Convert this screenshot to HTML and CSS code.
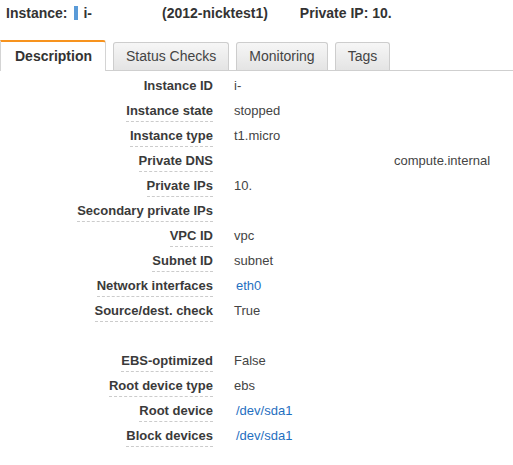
FILE: index.html
```html
<!DOCTYPE html>
<html>
<head>
<meta charset="utf-8">
<link rel="stylesheet" href="styles.css">
</head>
<body>
<div class="header">
  <span class="h-label">Instance:</span>
  <span class="h-bar"></span>
  <span class="h-id">i-</span>
  <span class="h-name">(2012-nicktest1)</span>
  <span class="h-ip">Private IP: 10.</span>
</div>
<div class="tabs">
  <div class="tab active">Description</div>
  <div class="tab">Status Checks</div>
  <div class="tab">Monitoring</div>
  <div class="tab">Tags</div>
</div>
<div class="details">
  <div class="lbl"><span class="plain">Instance ID</span></div><div class="val">i-</div>
  <div class="lbl"><span>Instance state</span></div><div class="val">stopped</div>
  <div class="lbl"><span>Instance type</span></div><div class="val">t1.micro</div>
  <div class="lbl"><span>Private DNS</span></div><div class="val"><span class="dns">compute.internal</span></div>
  <div class="lbl"><span>Private IPs</span></div><div class="val">10.</div>
  <div class="lbl"><span>Secondary private IPs</span></div><div class="val"></div>
  <div class="lbl"><span>VPC ID</span></div><div class="val">vpc</div>
  <div class="lbl"><span>Subnet ID</span></div><div class="val">subnet</div>
  <div class="lbl"><span>Network interfaces</span></div><div class="val"><a class="link">eth0</a></div>
  <div class="lbl"><span>Source/dest. check</span></div><div class="val">True</div>
  <div class="lbl"></div><div class="val"></div>
  <div class="lbl"><span>EBS-optimized</span></div><div class="val">False</div>
  <div class="lbl"><span>Root device type</span></div><div class="val">ebs</div>
  <div class="lbl"><span>Root device</span></div><div class="val"><a class="link">/dev/sda1</a></div>
  <div class="lbl"><span>Block devices</span></div><div class="val"><a class="link">/dev/sda1</a></div>
</div>
</body>
</html>
```
FILE: styles.css
```css
html, body {
  margin: 0;
  padding: 0;
  background: #fff;
}
body {
  font-family: "Liberation Sans", Arial, sans-serif;
  color: #444;
  width: 513px;
  height: 465px;
  overflow: hidden;
}
.header {
  display: flex;
  align-items: center;
  height: 26px;
  padding-left: 6px;
  font-size: 14px;
  font-weight: bold;
  color: #333;
}
.h-bar {
  display: inline-block;
  width: 4px;
  height: 14px;
  background: #5a9bd8;
  margin-left: 7px;
}
.h-id {
  margin-left: 5px;
}
.h-name {
  margin-left: 70px;
}
.h-ip {
  margin-left: 32px;
}
.tabs {
  display: flex;
  align-items: flex-end;
  gap: 7px;
  margin-top: 14px;
  border-bottom: 1px solid #cfcfcf;
  height: 30px;
}
.tab {
  box-sizing: border-box;
  height: 28px;
  line-height: 27px;
  padding: 0 12px;
  font-size: 14px;
  color: #444;
  border: 1px solid #cdcdcd;
  border-bottom: none;
  border-radius: 3px 3px 0 0;
  background: linear-gradient(#f6f6f6, #e4e4e4);
}
.tab.active {
  height: 31px;
  line-height: 28px;
  margin-bottom: -1px;
  padding: 0 13px 0 14px;
  border-top: 2px solid #f7931e;
  border-left: 1px solid #d4d4d4;
  border-right: 1px solid #d4d4d4;
  border-radius: 0 3px 0 0;
  background: #fff;
  font-weight: bold;
  color: #333;
}
.details {
  display: grid;
  grid-template-columns: 213px 1fr;
  column-gap: 21px;
  grid-auto-rows: 25px;
  margin-top: 3px;
  font-size: 13px;
}
.lbl {
  text-align: right;
  font-weight: bold;
  color: #3a3a3a;
  display: flex;
  justify-content: flex-end;
  align-items: flex-start;
  padding-top: 4px;
  box-sizing: border-box;
}
.lbl span {
  display: inline-block;
  line-height: 16px;
  padding-bottom: 2px;
  border-bottom: 1px dashed #cccccc;
}
.lbl span.plain {
  border-bottom-color: transparent;
}
.val {
  line-height: 16px;
  padding-top: 4px;
  box-sizing: border-box;
  color: #444;
}
.dns {
  margin-left: 160px;
}
.link {
  color: #1f6fbf;
  margin-left: 2px;
  text-decoration: none;
}
```
